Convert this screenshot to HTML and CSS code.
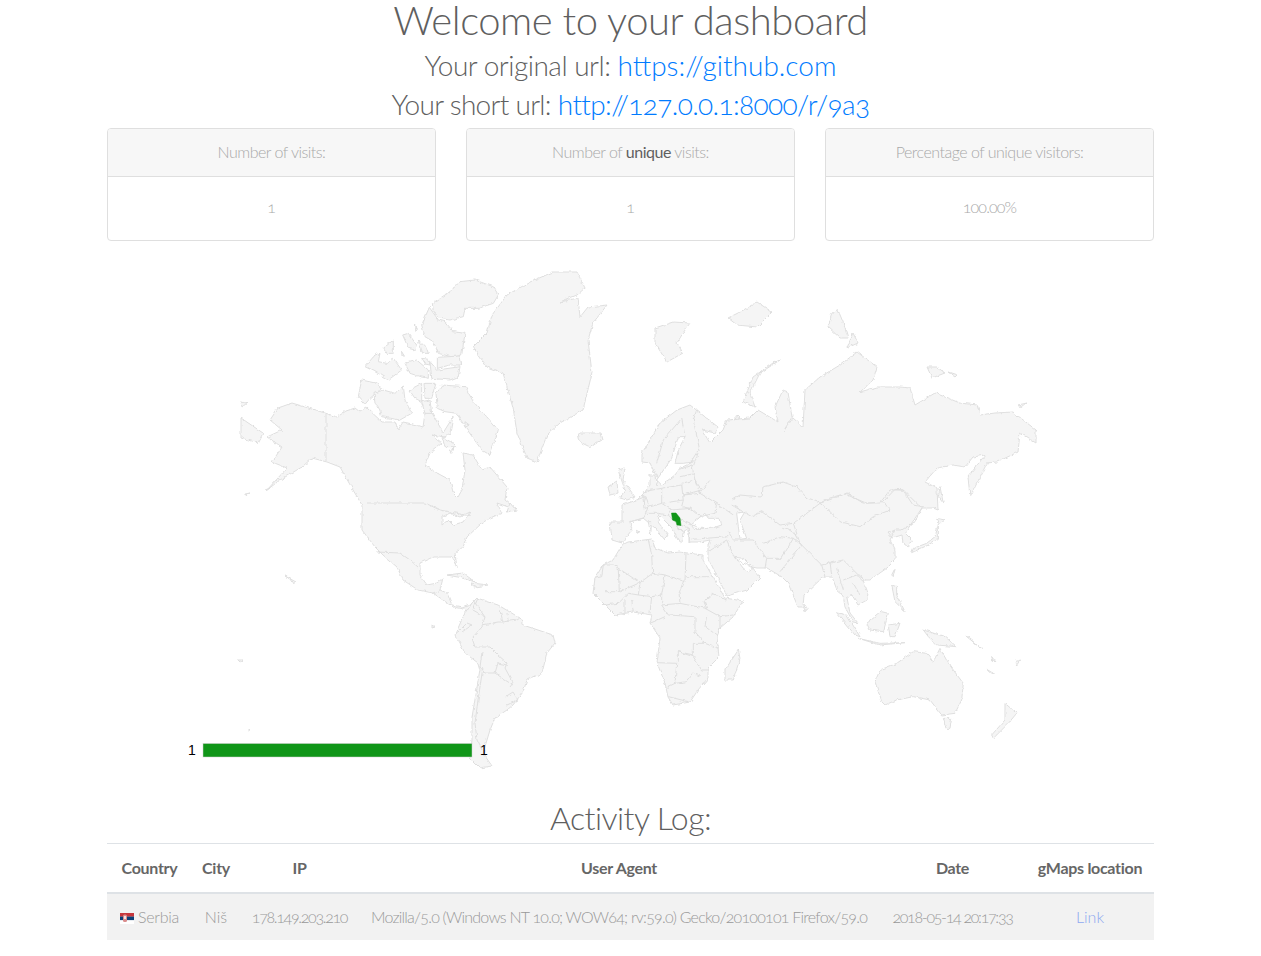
FILE: index.html
```html
<!DOCTYPE html>
<html lang="en">
<head>
<meta charset="utf-8">
<title>Dashboard</title>
<link rel="stylesheet" href="styles.css">
</head>
<body>
<main class="page">
  <header class="intro">
    <h1>Welcome to your dashboard</h1>
    <h2>Your original url: <a class="link-long" href="#">https://github.com</a></h2>
    <h2 class="short">Your short url: <a class="link-short" href="#">http://127.0.0.1:8000/r/9a3</a></h2>
  </header>
  <section class="cards">
    <div class="card"><div class="card-head">Number of visits:</div><div class="card-body">1</div></div>
    <div class="card"><div class="card-head">Number of <strong>unique</strong> visits:</div><div class="card-body">1</div></div>
    <div class="card"><div class="card-head">Percentage of unique visitors:</div><div class="card-body card-pct">100.00%</div></div>
  </section>
  <svg class="map" viewBox="107 250 1047 530" role="img" aria-label="World map of visits">
    <defs>
      <filter id="coast" filterUnits="userSpaceOnUse" x="107" y="250" width="1047" height="530" color-interpolation-filters="sRGB">
        <feTurbulence type="fractalNoise" baseFrequency="0.22" numOctaves="2" seed="4"/>
        <feDisplacementMap in="SourceGraphic" scale="3.5" xChannelSelector="R" yChannelSelector="G"/>
      </filter>
    </defs>
    <g class="rough">
    <g class="land">
      <!-- North America -->
      <path d="M292,403 L325,413 L337,417 L346,411 L355,408 L360,412 L367,408 L382,422 L395,422 L398,430 L403,422 L417,425 L423,427 L425,413 L432,413 L440,427 L443,433 L453,417 L450,433 L445,437 L432,435 L442,443 L430,453 L425,465 L437,473 L450,480 L453,492 L458,497 L462,490 L465,470 L463,453 L473,455 L482,470 L490,467 L507,487 L505,500 L517,510 L497,503 L502,513 L490,518 L482,523 L467,537 L463,547 L455,553 L457,568 L452,557 L433,557 L420,563 L420,575 L427,585 L437,583 L443,578 L440,590 L447,593 L452,605 L462,607 L472,603 L468,610 L453,607 L433,593 L418,590 L403,580 L397,567 L383,555 L375,547 L362,530 L362,517 L362,505 L353,490 L340,467 L327,462 L312,458 L302,467 L280,480 L267,490 L287,468 L272,462 L282,447 L267,437 L282,430 L270,420 L278,408 Z"/>
      <path d="M241,418 L263,433 L258,443 L241,438 Z M241,402 L247,403 L242,407 Z M245,494 L250,493 L245,495 Z M265,490 L270,488 L266,491 Z"/>
      <!-- Arctic Canada -->
      <g transform="translate(350 270) scale(.33333)">
        <path d="M247,100 L300,65 L330,35 L375,30 L430,50 L445,75 L430,100 L385,115 L345,115 L340,140 L300,150 L270,145 L250,125 Z"/>
        <path d="M215,165 L238,112 L265,150 L285,155 L310,185 L345,190 L335,255 L310,262 L265,250 L250,215 L225,200 Z"/>
        <path d="M45,290 L75,255 L90,250 L85,275 L110,280 L130,265 L155,300 L115,330 L75,305 Z"/>
        <path d="M100,235 L130,210 L130,250 L110,250 Z M158,195 L175,190 L200,225 L195,240 L175,235 Z M205,210 L230,235 L235,250 L218,250 Z M193,165 L202,175 L198,182 Z M155,245 L163,258 L156,258 Z"/>
        <path d="M165,280 L200,270 L235,300 L235,325 L210,320 L180,310 Z M240,275 L262,300 L330,290 L325,320 L300,330 L245,325 Z M262,262 L330,258 L335,285 L300,285 L262,295 Z M215,265 L235,268 L240,285 L225,282 Z"/>
        <path d="M35,330 L80,340 L95,355 L60,385 L45,403 L25,380 Z"/>
        <path d="M72,370 L100,360 L135,370 L160,348 L165,390 L185,430 L150,450 L95,440 L85,410 L75,400 Z"/>
        <path d="M178,360 L215,340 L215,395 L195,385 Z M222,340 L258,340 L245,385 L225,385 Z M215,395 L240,390 L245,430 L225,430 Z"/>
        <path d="M258,370 L275,345 L345,350 L370,395 L410,440 L445,480 L435,510 L420,555 L395,540 L370,505 L345,470 L320,430 L285,425 L262,415 Z"/>
        <path d="M275,500 L310,520 L320,530 L285,530 Z M345,455 L358,465 L345,472 Z M298,540 L312,535 L305,550 Z"/>
      </g>
      <path d="M510,503 L516,510 L507,512 Z"/>
      <!-- Greenland, Iceland -->
      <path d="M577,272 L585,288 L577,295 L560,302 L578,298 L580,317 L588,307 L607,305 L593,323 L588,340 L592,373 L583,410 L560,423 L547,435 L537,462 L527,458 L517,433 L513,407 L503,373 L487,367 L473,347 L487,333 L492,315 L507,295 L530,282 L553,272 Z"/>
      <path d="M578,433 L600,433 L602,440 L590,447 L580,442 Z"/>
      <!-- Caribbean, Pacific -->
      <path d="M447,575 L463,573 L475,582 L463,578 Z M470,583 L488,585 L475,587 Z M285,576 L296,582 L293,584 L290,579 Z M238,660 L243,660 L240,662 Z M432,625 L435,627 L432,628 Z M248,728 L250,730 L248,731 Z"/>
      <!-- South America -->
      <path d="M477,598 L498,605 L520,618 L523,625 L553,635 L555,643 L547,653 L542,673 L527,680 L523,692 L513,705 L507,710 L495,718 L490,730 L487,740 L483,753 L492,766 L480,768 L470,758 L472,740 L472,717 L480,670 L478,663 L465,653 L455,635 L463,617 L472,603 Z"/>
      <!-- Eurasia -->
      <path d="M660,423 L677,410 L690,405 L718,427 L715,433 L702,430 L710,443 L723,430 L727,420 L750,418 L758,410 L778,422 L775,407 L783,390 L788,392 L792,417 L783,432 L793,418 L803,427 L805,390 L820,377 L840,365 L857,352 L877,367 L873,380 L860,392 L877,387 L900,387 L910,388 L915,405 L935,393 L960,403 L977,405 L980,415 L995,413 L1013,412 L1036,430 L1036,443 L1020,433 L1018,452 L997,462 L987,463 L970,497 L968,477 L985,455 L973,457 L965,467 L953,465 L937,468 L925,482 L937,488 L938,510 L933,508 L922,508 L905,533 L912,540 L908,547 L903,543 L902,535 L892,538 L888,533 L895,530 L890,540 L895,550 L895,560 L887,568 L870,580 L863,580 L868,593 L867,600 L858,605 L852,595 L847,598 L850,613 L858,623 L853,622 L845,607 L843,595 L837,590 L832,577 L823,577 L804,595 L803,607 L798,607 L788,583 L782,577 L767,568 L757,568 L752,567 L760,577 L747,590 L727,596 L725,592 L708,558 L708,545 L710,540 L700,542 L689,542 L689,528 L683,532 L682,543 L678,540 L672,528 L659,515 L658,522 L668,535 L665,540 L655,528 L643,518 L630,522 L632,530 L622,543 L612,540 L610,522 L622,522 L622,505 L637,500 L645,492 L650,485 L650,475 L655,475 L656,486 L658,480 L650,463 L642,462 L642,453 Z"/>
      <!-- Britain, Ireland -->
      <path d="M618,470 L625,468 L623,480 L635,497 L627,500 L620,498 L625,490 Z M608,487 L617,482 L618,493 L610,495 Z"/>
      <!-- Arctic Eurasia -->
      <path d="M655,328 L673,322 L690,323 L683,333 L677,343 L683,353 L667,362 L655,343 Z"/>
      <path d="M728,318 L740,312 L757,302 L772,312 L757,327 L737,325 Z"/>
      <path d="M780,360 L773,363 L753,377 L743,402 L755,407 L750,393 L760,373 Z"/>
      <path d="M838,310 L843,322 L848,338 L840,338 L828,327 L832,313 Z M853,333 L858,343 L847,348 Z"/>
      <path d="M927,367 L937,367 L945,373 L932,378 Z M948,372 L957,375 L955,377 Z M1018,405 L1027,403 L1022,407 Z M737,415 L740,418 L735,420 Z"/>
      <!-- Africa -->
      <path d="M628,542 L652,539 L655,548 L668,553 L680,552 L703,555 L703,560 L725,598 L743,601 L733,617 L720,628 L717,637 L719,657 L708,668 L708,678 L698,690 L690,702 L673,705 L668,697 L665,683 L657,663 L660,638 L650,623 L652,615 L633,612 L615,615 L605,605 L593,593 L595,578 L603,565 L613,560 L622,545 Z"/>
      <g transform="translate(580 480) scale(.33333)">
        <path d="M1075,135 L1065,170 L1040,190 L1000,205 L995,218 L1045,195 L1075,175 Z M1070,115 L1095,120 L1075,135 Z M1080,20 L1090,70 L1075,50 Z M935,285 L945,265 L940,290 Z M935,315 L950,320 L950,345 L975,395 L945,365 Z"/>
        <path d="M860,430 L905,395 L925,400 L910,455 L870,450 Z M770,398 L800,405 L840,470 L825,465 Z M835,475 L900,490 L975,488 L900,495 Z M925,435 L960,430 L945,470 L930,470 Z M1030,450 L1095,470 L1130,500 L1070,495 L1045,470 Z"/>
        <path d="M1000,515 L1040,520 L1060,545 L1080,505 L1105,550 L1150,610 L1145,660 L1125,700 L1085,705 L1050,660 L1000,650 L950,660 L915,675 L905,665 L885,605 L900,570 L950,550 Z"/>
        <path d="M1275,670 L1310,700 L1285,730 L1240,775 L1235,765 L1275,720 Z M1090,715 L1115,715 L1110,745 L1098,745 Z M475,510 L480,535 L460,600 L435,600 L435,570 Z M670,375 L685,385 L675,395 Z M1235,530 L1245,543 L1238,540 Z M1305,545 L1322,540 L1310,555 Z M1220,568 L1240,580 L1232,580 Z M1155,465 L1205,505 L1190,495 Z M205,125 L215,125 L212,165 Z M170,150 L180,155 L172,160 Z"/>
      </g>
    </g>
    <g class="water" transform="translate(580 480) scale(.33333)">
      <path d="M335,130 L375,100 L385,115 L420,115 L425,135 L395,145 L340,145 Z M470,100 L495,95 L480,120 L500,175 L480,178 L475,140 Z M465,232 L490,235 L520,265 L505,275 L490,265 Z"/>
    </g>
    <g class="water" transform="translate(600 400) scale(.33333)">
      <path d="M170,240 L215,175 L235,110 L255,110 L235,150 L225,190 L250,190 L280,185 L240,205 L225,225 L185,255 Z"/>
    </g>
    <g class="water">
      <path d="M442,517 L450,513 L460,517 L470,512 L463,522 L453,525 L448,520 L442,525 Z"/>
    </g>
    <g class="borders">
      <path d="M326,413 L326,461 M367,503 L425,503 L440,510 L470,516 M377,552 L400,553 L410,560 L418,567 M440,590 L433,593"/>
      <path d="M473,600 L485,617 L482,627 L472,638 L475,647 L490,647 L498,655 L507,663 L505,668 L513,683 L510,687 M483,667 L478,700 L475,723 L477,740 L482,750 M482,652 L480,667 L485,673 L495,673 L505,680 L513,685 M495,673 L498,663 L507,665 M505,697 L513,692 L518,700 L507,705 M457,633 L467,623 L472,625 L462,632 M482,625 L498,622 L503,622 L517,620 L520,618 M500,610 L503,622 M507,613 L508,620 M478,598 L473,610 L485,617"/>
      <g transform="translate(580 480) scale(.33333)">
        <path d="M100,255 L70,255 L65,290 L45,295 M100,255 L180,308 L218,280 L215,225 L205,180 M115,270 L118,335 L75,335 M118,335 L180,308 M180,308 L175,345 L215,350 L245,345 L255,285 L218,280 M255,285 L315,305 L318,220 M318,290 L390,290 M245,345 L245,375 L300,370 L297,340 L310,305 M300,370 L340,378 L380,385 L372,365 L400,340 M395,340 L440,360 M375,385 L420,410 L460,405 M380,405 L375,440 L410,465 L420,445 L420,410 M265,405 L345,410 L345,455 L375,490 L340,490 L340,525 L295,515 L295,545 M255,410 L210,430 M245,375 L265,405 M230,548 L290,550 L285,610 M255,625 L285,610 L320,605 L340,580 L365,590 M265,650 L325,665 M295,515 L340,530 L365,570 L385,570 M375,490 L415,505 M135,360 L135,400 M155,360 L160,395 M75,375 L115,370 L145,340 L175,345 M210,400 L215,350"/>
        <path d="M720,70 L795,42 L860,70 L910,65 L930,90 L880,110 L840,140 L780,125 L745,90 Z M910,65 L945,28 L970,30 L1025,85 L1005,125 L965,150 L945,150 M660,190 L725,255 L790,240 L840,290 L860,300 M455,75 L515,110 L545,95 L600,135 L640,130 M640,155 L610,145 M445,155 L460,180 L520,180 L560,235 L555,265 M550,190 L600,170 L640,175 L605,235 L560,235 M640,175 L665,195 L625,245 L600,275 M335,178 L445,170 M385,215 L440,180 L465,235 L520,265 M720,70 L640,130 L660,190 L640,155 M770,265 L790,330 M790,300 L830,285 L850,305 M820,310 L840,345 M725,255 L735,290 M750,245 L755,285"/>
      </g>
      <g transform="translate(600 400) scale(.33333)">
        <path d="M290,30 L280,60 L298,145 L270,190 M245,55 L190,120 L170,190 M245,55 L255,110 M90,365 L130,355 L145,320 L135,290 L110,300 M135,325 L130,275 L185,265 L185,310 L135,325 M185,265 L245,255 L250,300 L185,310 M250,285 L300,280 L350,310 L345,340 L300,350 L270,325 L245,320 L250,300 M245,250 L285,240 L305,270 L250,285 M235,210 L275,195 L285,240 M240,230 L280,222 M185,310 L215,330 L270,325 M215,330 L205,345 L175,340 M140,340 L175,340 M205,345 L250,395 M240,360 L290,380 M240,375 L268,385 L268,425 M225,375 L250,395 M285,240 L300,280 M300,280 L330,240 M350,310 L400,345"/>
      </g>
      <path d="M692,470 L698,453 M732,500 L740,495 L762,497 L763,487 L783,482 L797,487 L807,498 L820,503 L830,498 L847,493 L863,503 L880,503 L890,490 L903,490 L913,505 L923,507"/>
    </g>
    </g>
    <path class="serbia" d="M671.5,513 L676,513 L680,518 L681,525.5 L677,525 L676,521.5 L672.5,520 Z"/>
    <g class="legend">
      <rect x="203" y="743.5" width="269" height="13.5"/>
      <text x="192" y="755" text-anchor="middle">1</text>
      <text x="484" y="755" text-anchor="middle">1</text>
    </g>
  </svg>
  <h3 class="log-title">Activity Log:</h3>
  <table class="log">
    <colgroup>
      <col class="c-country"><col class="c-city"><col class="c-ip"><col class="c-agent"><col class="c-date"><col class="c-maps">
    </colgroup>
    <thead>
      <tr><th>Country</th><th>City</th><th>IP</th><th>User Agent</th><th>Date</th><th>gMaps location</th></tr>
    </thead>
    <tbody>
      <tr>
        <td class="cell-country"><svg class="flag" viewBox="0 0 14 11" aria-hidden="true"><rect width="14" height="3.7" fill="#c6363c"/><rect y="3.6" width="14" height="3.7" fill="#0c4076"/><rect y="7.3" width="14" height="3.7" fill="#fff"/><rect x="3" y="1.5" width="4" height="7.5" rx="1.5" fill="#d98c8c"/><rect x="4" y="3" width="2" height="3" fill="#f4e2e2"/></svg> Serbia</td>
        <td>Niš</td>
        <td class="cell-num">178.149.203.210</td>
        <td class="cell-agent">Mozilla/5.0 (Windows NT 10.0; WOW64; rv:59.0) Gecko/20100101 Firefox/59.0</td>
        <td class="cell-num">2018-05-14 20:17:33</td>
        <td><a href="#">Link</a></td>
      </tr>
    </tbody>
  </table>
</main>
</body>
</html>
```
FILE: styles.css
```css
* { box-sizing: border-box; }
html, body { margin: 0; background: #fff; }
body {
  font-family: "Lato", "Open Sans", sans-serif;
  font-weight: 300;
  font-variant-numeric: oldstyle-nums;
  color: #666;
}
.page { padding: 0 107px 16px; }
.intro { text-align: center; color: #5f5f5f; }
h1 { margin: 0 0 6px; font-size: 40px; font-weight: 300; line-height: 40px; letter-spacing: -.46px; }
h2 { margin: 0; font-size: 28px; font-weight: 300; line-height: 39px; letter-spacing: -.5px; }
h2.short { letter-spacing: -.7px; }
a { color: #007bff; text-decoration: none; }
.link-long { letter-spacing: 0; }
.link-short { letter-spacing: -.63px; }
.cards { display: grid; grid-template-columns: repeat(3, 1fr); gap: 30px; margin-top: 4px; }
.card { border: 1px solid #dfdfdf; border-radius: 4px; text-align: center; color: #a9a9a9; font-size: 16px; }
.card-head { height: 48px; line-height: 45px; background: #f7f7f7; border-bottom: 1px solid #dfdfdf; border-radius: 3px 3px 0 0; letter-spacing: -.5px; }
.card-head strong { font-weight: 400; color: #5f5f5f; }
.card-body { height: 63px; line-height: 60px; }
.card-pct { letter-spacing: -.85px; }
.map { display: block; width: 100%; height: 530px; margin-top: 9px; }
.rough { filter: url(#coast); }
.land path { fill: #f5f5f5; stroke: #dfdfdf; stroke-width: 1; stroke-linejoin: round; vector-effect: non-scaling-stroke; }
.water path { fill: #fff; stroke: #dfdfdf; stroke-width: 1; vector-effect: non-scaling-stroke; }
.borders path { fill: none; stroke: #dfdfdf; stroke-width: 1; vector-effect: non-scaling-stroke; }
.serbia { fill: #109618; stroke: #0f8f17; stroke-width: .5; }
.legend rect { fill: #109618; stroke: #cfcfcf; stroke-width: .5; }
.legend text { font-family: "Liberation Sans", Arial, sans-serif; font-size: 14px; font-weight: 400; font-variant-numeric: normal; fill: #000; }
.log-title { margin: 13px 0 1px; font-size: 32px; font-weight: 300; line-height: 49px; text-align: center; color: #5f5f5f; letter-spacing: -.55px; }
.log { width: 100%; border-collapse: collapse; table-layout: fixed; }
.c-country { width: 85px; }
.c-city { width: 48px; }
.c-ip { width: 119px; }
.c-agent { width: 520px; }
.c-date { width: 147px; }
.c-maps { width: 128px; }
.log th, .log td { padding: 0 4px; text-align: center; white-space: nowrap; }
.log th { height: 49px; border-top: 1px solid #dee2e6; border-bottom: 2px solid #dee2e6; font-size: 16px; font-weight: 700; color: #666; letter-spacing: -.3px; }
.log td { height: 47px; background: #f2f2f2; font-size: 16px; color: #999; }
.log td a { color: #8fa9f0; }
.cell-country { letter-spacing: -.3px; }
.cell-num { letter-spacing: -1.3px; }
.cell-agent { letter-spacing: -.76px; }
.flag { width: 14px; height: 11px; vertical-align: -1px; }
```
